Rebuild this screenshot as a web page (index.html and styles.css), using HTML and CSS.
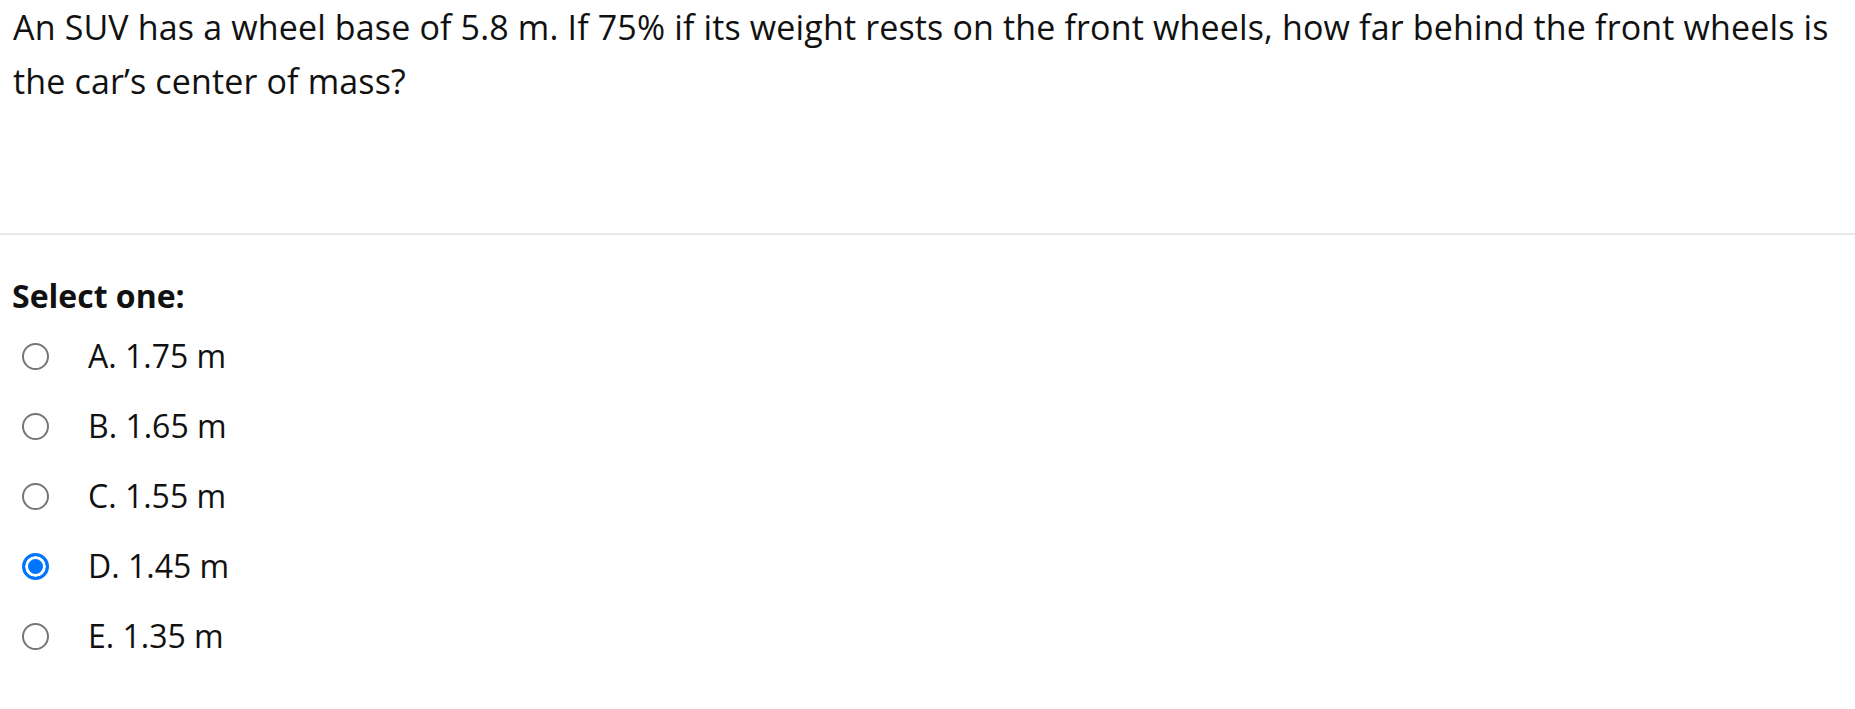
FILE: index.html
```html
<!DOCTYPE html>
<html lang="en">
<head>
<meta charset="utf-8">
<title>Question</title>
<link rel="stylesheet" href="styles.css">
</head>
<body>
<div class="question">
  <div class="qtext">An SUV has a wheel base of 5.8 m. If 75% if its weight rests on the front wheels, how far behind the front wheels is the car’s center of mass?</div>
  <div class="divider"></div>
  <div class="ablock">
    <div class="prompt">Select one:</div>
    <div class="answers">
      <label class="opt"><input type="radio" name="q1" class="radio"><span class="label">A. 1.75 m</span></label>
      <label class="opt"><input type="radio" name="q1" class="radio"><span class="label">B. 1.65 m</span></label>
      <label class="opt"><input type="radio" name="q1" class="radio"><span class="label">C. 1.55 m</span></label>
      <label class="opt"><input type="radio" name="q1" class="radio" checked><span class="label">D. 1.45 m</span></label>
      <label class="opt"><input type="radio" name="q1" class="radio"><span class="label">E. 1.35 m</span></label>
    </div>
  </div>
</div>
</body>
</html>
```
FILE: styles.css
```css
html, body {
  margin: 0;
  padding: 0;
  background: #ffffff;
}

body {
  font-family: "Open Sans", "Noto Sans", sans-serif;
  font-size: 32px;
  color: #111111;
}

.question {
  display: flex;
  flex-direction: column;
}

.qtext {
  padding: 0 0 0 13px;
  font-size: 34px;
  letter-spacing: 0.15px;
  line-height: 54px;
  margin-top: 0;
}

.divider {
  margin-top: 125px;
  height: 0;
  border-top: 2px solid #e4e8ec;
}

.ablock {
  display: flex;
  flex-direction: column;
  padding-top: 36px;
}

.prompt {
  font-weight: 700;
  line-height: 50px;
  padding-left: 12px;
}

.answers {
  display: flex;
  flex-direction: column;
}

.opt {
  display: flex;
  align-items: center;
  height: 70px;
}

.radio {
  appearance: none;
  -webkit-appearance: none;
  box-sizing: border-box;
  width: 27px;
  height: 27px;
  margin: 0 39px 0 22px;
  border: 2.5px solid #767676;
  border-radius: 50%;
  background: #ffffff;
  flex: none;
}

.radio:checked {
  border: 3px solid #0075ff;
  background: #0075ff;
  box-shadow: inset 0 0 0 3px #ffffff;
}

.label {
  line-height: 70px;
}
```
